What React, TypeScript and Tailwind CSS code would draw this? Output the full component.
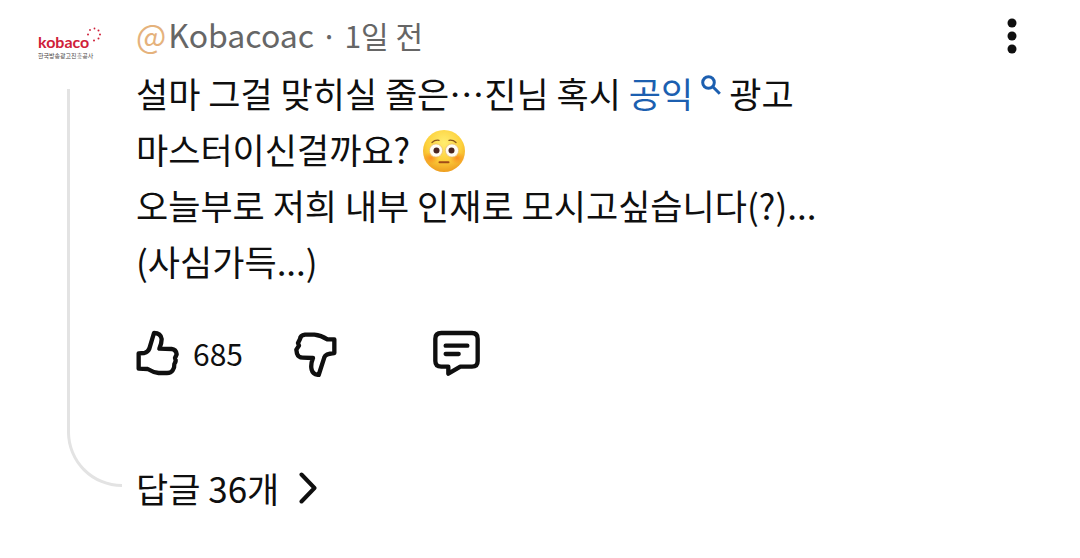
import type { ReactNode } from "react";

function ChannelLogo() {
  return (
    <a href="#channel" aria-label="kobaco" className="relative block h-9 w-16 pt-1 whitespace-nowrap">
      <span className="block font-['Lato',sans-serif] text-[16px] leading-5 font-bold text-[#cf2039]">kobaco</span>
      <span className="block font-['Noto_Sans_CJK_KR',sans-serif] text-[6px] leading-2 text-[#4a4444]">한국방송광고진흥공사</span>
      <svg viewBox="0 0 16 16" className="absolute -top-px right-0 size-4" fill="#cf2039" aria-hidden="true">
        <circle cx="2" cy="7.5" r="1" />
        <circle cx="4" cy="3" r="0.9" />
        <circle cx="8.5" cy="1.5" r="0.9" />
        <circle cx="12.5" cy="3.5" r="1" />
        <circle cx="14" cy="7.5" r="1" />
        <circle cx="12.5" cy="11.5" r="1" />
        <circle cx="8" cy="13.5" r="1" />
      </svg>
    </a>
  );
}

function FlushedFace() {
  return (
    <svg viewBox="0 0 44 44" className="-mt-1 mb-1 ml-1 inline-block size-11 align-middle" role="img" aria-label="😳">
      <defs>
        <radialGradient id="face" cx="50%" cy="30%" r="70%">
          <stop offset="0%" stopColor="#ffed70" />
          <stop offset="60%" stopColor="#fdd13c" />
          <stop offset="100%" stopColor="#ee9e20" />
        </radialGradient>
        <radialGradient id="cheek">
          <stop offset="0%" stopColor="#fb7a1c" stopOpacity="0.75" />
          <stop offset="100%" stopColor="#fb8a1c" stopOpacity="0" />
        </radialGradient>
      </defs>
      <circle cx="22" cy="22" r="21" fill="url(#face)" />
      <ellipse cx="9" cy="29" rx="8" ry="6" fill="url(#cheek)" />
      <ellipse cx="35" cy="29" rx="8" ry="6" fill="url(#cheek)" />
      <circle cx="14" cy="21.5" r="6.6" fill="#fffdf5" stroke="#eab765" strokeWidth="0.7" />
      <circle cx="30" cy="21.5" r="6.6" fill="#fffdf5" stroke="#eab765" strokeWidth="0.7" />
      <circle cx="14.5" cy="21.5" r="3" fill="#4a2521" />
      <circle cx="29.5" cy="21.5" r="3" fill="#4a2521" />
      <path d="M10 13.5q3-2.8 7-2.2M34 13.5q-3-2.8-7-2.2" fill="none" stroke="#8a561b" strokeWidth="1.3" strokeLinecap="round" />
      <path d="M17.5 33.2h9" stroke="#a04b18" strokeWidth="2" strokeLinecap="round" />
    </svg>
  );
}

function SearchMark() {
  return (
    <svg viewBox="0 0 20 20" className="mx-2 inline-block size-5 align-super" fill="none" stroke="#1c5fb0" strokeWidth="3" aria-hidden="true">
      <circle cx="7.5" cy="7.5" r="5.8" />
      <path d="M11.8 11.8l7 7" />
    </svg>
  );
}

function ActionButton({ label, className, children }: { label: string; className?: string; children: ReactNode }) {
  return (
    <button type="button" aria-label={label} className={`flex items-center ${className ?? ""}`}>
      {children}
    </button>
  );
}

export default function App() {
  return (
    <article className="flex bg-white pt-2 pr-12 pb-10 pl-[38px] font-['Noto_Sans_CJK_KR',sans-serif] text-[#0f0f0f]">
      <div className="mr-[14px] flex w-[84px] shrink-0 flex-col pt-5">
        <ChannelLogo />
        {/* thread line down to the replies link */}
        <div className="mt-[25px] mb-[29px] ml-[29px] flex-1 rounded-bl-[55px] border-b-3 border-l-3 border-[#e3e3e3]" />
      </div>

      <div className="min-w-0 flex-1">
        <header className="flex h-14 items-start justify-between">
          <p className="text-[32px] leading-[52px] text-[#666]">
            <a href="#channel"><span className="mr-0.5 text-[#e5b27c]">@</span>Kobacoac</a>
            <span className="text-[30px]"> · 1일 전</span>
          </p>
          <button type="button" aria-label="더보기" className="flex h-14 w-10 items-center justify-center">
            <svg viewBox="0 0 10 36" className="h-9 w-[10px]" fill="currentColor">
              <circle cx="5" cy="5" r="4.5" />
              <circle cx="5" cy="18" r="4.5" />
              <circle cx="5" cy="31" r="4.5" />
            </svg>
          </button>
        </header>

        <p className="mt-px text-[35px] leading-14">
          설마 그걸 맞히실 줄은⋯진님 혹시 <a href="#search" className="text-[#1c5fb0]">공익<SearchMark /></a>광고
          <br />
          마스터이신걸까요? <FlushedFace />
          <br />
          오늘부로 저희 내부 인재로 모시고싶습니다(?)...
          <br />
          (사심가득...)
        </p>

        <div className="mt-10 flex h-12 items-center">
          <ActionButton label="좋아요 685" className="gap-[13px]">
            <svg viewBox="35 38 132 144" className="h-12 w-11" fill="none" stroke="currentColor" strokeWidth="13" strokeLinejoin="round">
              <path d="M43 111L60 110Q71 107 75 97L89 50Q109 50 112 68Q112 82 105 97L142 98Q155 99 157 114L152 125Q157 134 150 143Q151 153 145 162Q140 170 128 170L103 170Q86 168 70 158L43 157Z" />
            </svg>
            <span className="text-[30px]">685</span>
          </ActionButton>
          <ActionButton label="싫어요" className="ml-[50px]">
            <svg viewBox="506 38 132 144" className="h-12 w-11" fill="none" stroke="currentColor" strokeWidth="13" strokeLinejoin="round">
              <path d="M630 69L609 69Q590 57 570 55L542 55Q528 57 527 68L521 80L524 88L516 100L518 112Q522 124 535 124L566 125Q558 145 562 160Q565 173 583 176L600 123Q604 112 630 110Z" />
            </svg>
          </ActionButton>
          <ActionButton label="댓글" className="ml-[95px]">
            <svg viewBox="36 28 150 144" className="h-12 w-[50px]" fill="none" stroke="currentColor" strokeWidth="13" strokeLinejoin="round" strokeLinecap="round">
              <path d="M64 40H156Q173 40 173 57V124Q173 141 156 141H121L85 162V141H64Q46 141 46 124V57Q46 40 64 40Z" />
              <path d="M77 78H142M77 103H116" />
            </svg>
          </ActionButton>
        </div>

        <button type="button" className="mt-[83px] flex h-14 items-center gap-5 text-[35px]">
          답글 36개
          <svg viewBox="0 0 18 32" className="h-8 w-[18px]" fill="none" stroke="currentColor" strokeWidth="4" strokeLinecap="round" strokeLinejoin="round">
            <path d="M2.5 2.5L15.5 16L2.5 29.5" />
          </svg>
        </button>
      </div>
    </article>
  );
}
